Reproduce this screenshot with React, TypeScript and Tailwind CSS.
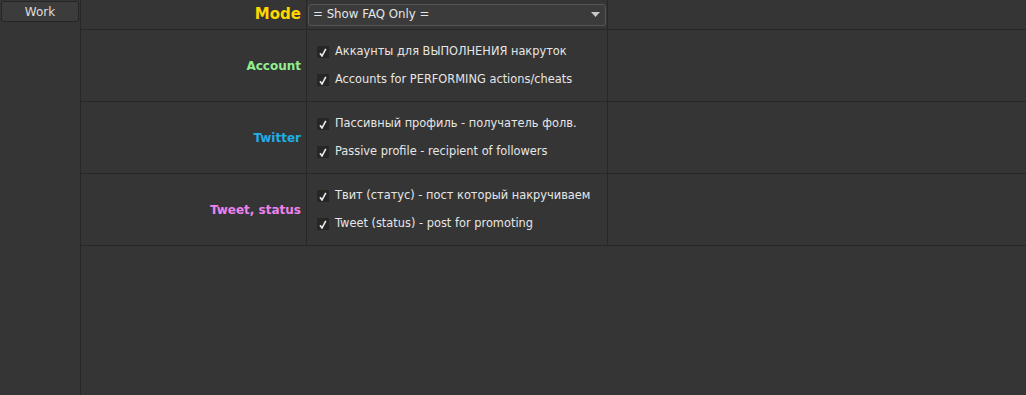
import React from "react";

const font = { fontFamily: '"DejaVu Sans", Verdana, sans-serif' };

function Check({ label }: { label: string }) {
  return (
    <div className="flex items-center h-[28px]">
      <div className="w-[12px] h-[12px] bg-[#262626] flex items-center justify-center ml-[10px]">
        <svg width="8" height="9" viewBox="0 0 8 9">
          <path d="M1 5.2L3 8L6.8 0.8" stroke="#ececec" strokeWidth="1.6" fill="none" />
        </svg>
      </div>
      <span className="ml-[6px] text-[11.4px] text-[#e6e6e6] whitespace-nowrap">{label}</span>
    </div>
  );
}

function Row({ label, color, items }: { label: string; color: string; items: string[] }) {
  return (
    <div className="grid grid-cols-[226px_301px_1fr] h-[72px] border-b border-[#272727]">
      <div className="border-r border-[#272727] flex items-center justify-end pr-[5px]">
        <span className={`text-[12px] font-bold ${color}`}>{label}</span>
      </div>
      <div className="border-r border-[#272727] flex flex-col justify-center pt-[1px]">
        {items.map((t) => (
          <Check key={t} label={t} />
        ))}
      </div>
      <div />
    </div>
  );
}

export default function App() {
  return (
    <div className="w-[1026px] h-[395px] bg-[#353535] flex overflow-hidden" style={font}>
      <div className="w-[81px] border-r border-[#272727] pt-[1px] pl-[1px]">
        <div className="w-[78px] h-[21px] rounded-[3px] bg-[#3c3c3c] border border-[#252525] flex items-center justify-center text-[12px] text-[#dcdcdc]">
          Work
        </div>
      </div>
      <div className="flex-1 flex flex-col">
        <div className="grid grid-cols-[226px_301px_1fr] h-[30px] border-b border-[#272727]">
          <div className="border-r border-[#272727] flex items-center justify-end pr-[5px]">
            <span className="text-[15px] font-bold text-[#ffd700]">Mode</span>
          </div>
          <div className="border-r border-[#272727] flex items-center pl-[1px] pr-[1px]">
            <div className="w-[298px] h-[22px] rounded-[3px] bg-[#3b3b3b] border border-[#555555] flex items-center justify-between pl-[4px] pr-[5px]">
              <span className="text-[11.8px] text-[#e6e6e6]">= Show FAQ Only =</span>
              <svg width="9" height="5" viewBox="0 0 9 5">
                <path d="M0 0H9L4.5 5Z" fill="#c8c8c8" />
              </svg>
            </div>
          </div>
          <div />
        </div>
        <Row
          label="Account"
          color="text-[#90ee90]"
          items={["Аккаунты для ВЫПОЛНЕНИЯ накруток", "Accounts for PERFORMING actions/cheats"]}
        />
        <Row
          label="Twitter"
          color="text-[#1eaee8]"
          items={["Пассивный профиль - получатель фолв.", "Passive profile - recipient of followers"]}
        />
        <Row
          label="Tweet, status"
          color="text-[#ee82ee]"
          items={["Твит (статус) - пост который накручиваем", "Tweet (status) - post for promoting"]}
        />
      </div>
    </div>
  );
}
